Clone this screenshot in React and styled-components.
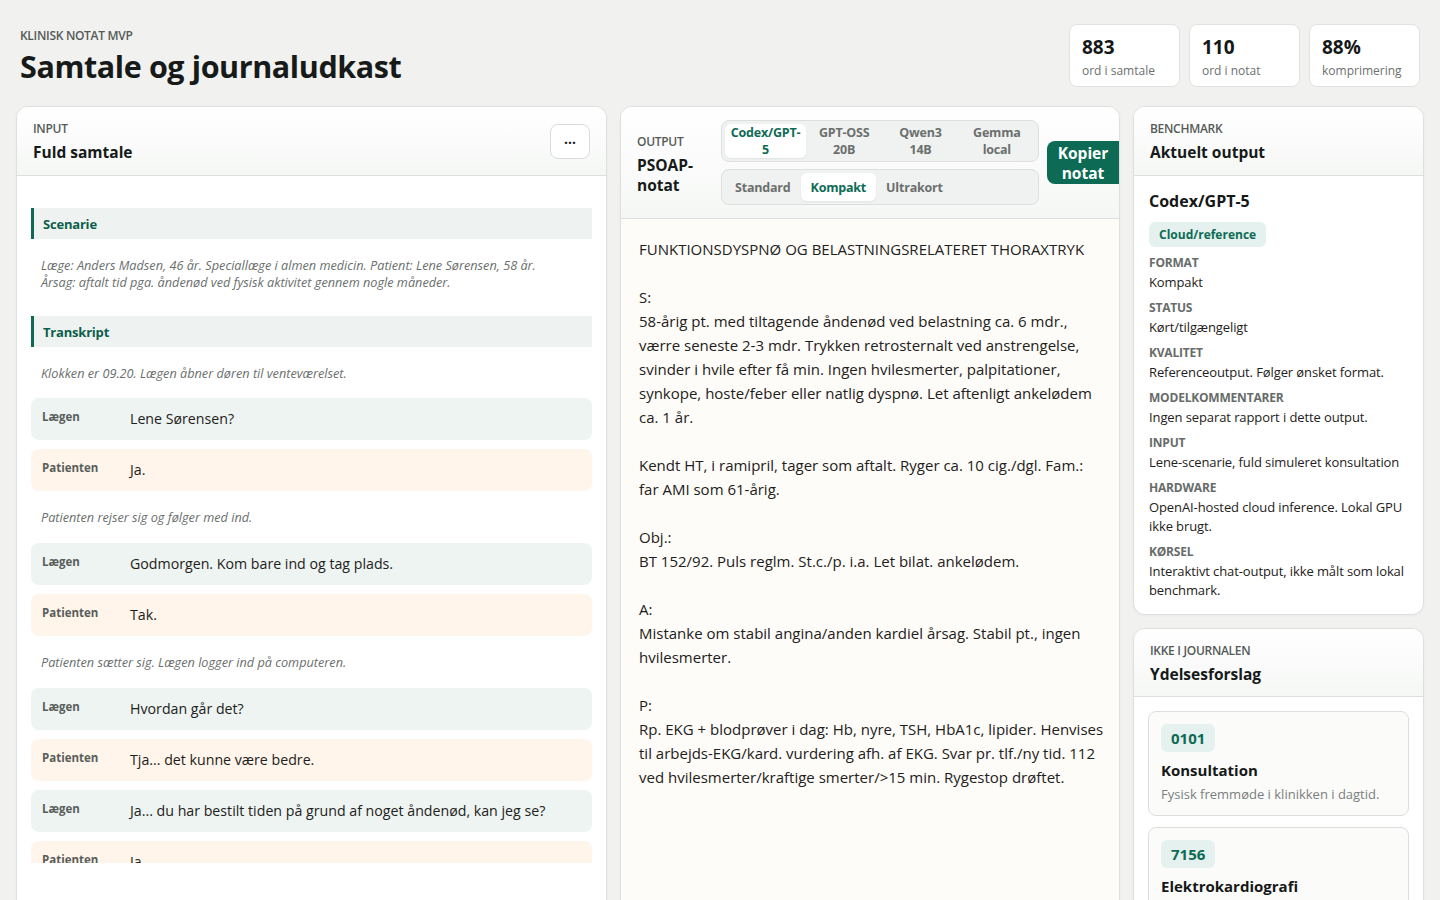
import React from "react";
import styled, { createGlobalStyle } from "styled-components";

const GlobalStyle = createGlobalStyle`
  body {
    margin: 0;
    background: #f1f1ef;
    font-family: "Open Sans", "Noto Sans", sans-serif;
    color: #1c1f1e;
    overflow: hidden;
  }
  * { box-sizing: border-box; }
`;

const Page = styled.div`
  padding: 0 16px;
  height: 900px;
  overflow: hidden;
`;

const Header = styled.header`
  display: flex;
  justify-content: space-between;
  align-items: center;
  padding: 23px 4px 19px 4px;
`;

const Kicker = styled.div`
  font-size: 12px;
  font-weight: 600;
  letter-spacing: -0.3px;
  color: #555a58;
  text-transform: uppercase;
`;

const PageKicker = styled(Kicker)`
  margin-top: 4px;
`;

const Title = styled.h1`
  margin: 1px 0 0;
  font-size: 30.5px;
  font-weight: 700;
  letter-spacing: -0.4px;
  color: #161a19;
`;

const Stats = styled.div`
  display: flex;
  gap: 9px;
`;

const Stat = styled.div`
  width: 111px;
  height: 63px;
  background: #fff;
  border: 1px solid #e0e2e1;
  border-radius: 8px;
  padding: 10px 12px;
`;

const StatValue = styled.div`
  font-size: 19px;
  font-weight: 700;
  line-height: 24px;
  color: #151817;
`;

const StatLabel = styled.div`
  font-size: 12px;
  color: #6b706e;
  margin-top: 3px;
`;

const Grid = styled.main`
  display: grid;
  grid-template-columns: 591px 500px 1fr;
  gap: 13px;
  align-items: start;
`;

const Panel = styled.section`
  background: #fff;
  border: 1px solid #dde0de;
  border-radius: 12px;
  overflow: hidden;
  box-shadow: 0 1px 3px rgba(0, 0, 0, 0.04);
  min-height: ${(p) => p.$minHeight || "auto"};
`;

const PanelHead = styled.div`
  display: flex;
  align-items: center;
  justify-content: space-between;
  gap: 8px;
  min-height: ${(p) => p.$height || "69px"};
  padding: ${(p) => p.$pad || "0 16px"};
  background: linear-gradient(180deg, #ffffff 0%, #f5f7f5 100%);
  border-bottom: 1px solid #dbe0de;
`;

const HeadTitle = styled.div`
  font-size: 15.5px;
  font-weight: 700;
  color: #161a19;
  margin-top: 5px;
  line-height: 20px;
`;

const MoreButton = styled.button`
  width: 40px;
  height: 35px;
  border: 1px solid #d9dcdb;
  border-radius: 8px;
  background: #fff;
  font-size: 14px;
  font-weight: 700;
  color: #222;
  padding: 0 0 6px;
  font-family: inherit;
`;

const InputBody = styled.div`
  padding: 32px 14px 0;
  height: 687px;
  overflow: hidden;
`;

const Flow = styled.div`
  display: flex;
  flex-direction: column;
  gap: 9px;
`;

const SectionBar = styled.div`
  height: 31px;
  display: flex;
  align-items: center;
  padding: 0 9px;
  background: #eef3f1;
  border-left: 3px solid #0d6b55;
  font-size: 13px;
  font-weight: 700;
  color: #0d5e4b;
  letter-spacing: -0.2px;
`;

const Note = styled.p`
  margin: ${(p) => p.$margin || "9px 0 8px"};
  padding: 0 10px;
  font-size: 12.7px;
  font-style: italic;
  line-height: 17px;
  color: #6a6f6d;
`;

const Line = styled.div`
  display: grid;
  grid-template-columns: 88px 1fr;
  align-items: start;
  min-height: 42px;
  padding: 11px 11px 9px;
  border-radius: 8px;
  background: ${(p) => (p.$who === "doc" ? "#edf4f1" : "#fff5ea")};
`;

const Speaker = styled.span`
  font-size: 11.5px;
  font-weight: 700;
  color: #595e5c;
  line-height: 16px;
`;

const Speech = styled.span`
  font-size: 14.2px;
  line-height: 20px;
  color: #1e2120;
`;

const OutTitleBlock = styled.div`
  width: 76px;
  flex-shrink: 0;
  padding-top: 3px;
`;

const Controls = styled.div`
  display: flex;
  flex-direction: column;
  gap: 7px;
  width: 318px;
  flex-shrink: 0;
`;

const TabGroup = styled.div`
  display: ${(p) => (p.$equal ? "grid" : "flex")};
  grid-template-columns: 81px 1fr 1fr 1fr;
  padding: 3px;
  background: #f0f2f1;
  border: 1px solid #dcdfdd;
  border-radius: 8px;
  min-height: ${(p) => (p.$equal ? "41px" : "36px")};
`;

const Tab = styled.div`
  display: flex;
  align-items: center;
  justify-content: center;
  text-align: center;
  padding: 0 ${(p) => (p.$tight ? "6px" : "10px")};
  border-radius: 6px;
  font-size: 12.5px;
  font-weight: 700;
  line-height: 17px;
  letter-spacing: -0.2px;
  color: ${(p) => (p.$active ? "#0d6b55" : "#6b6f6d")};
  background: ${(p) => (p.$active ? "#fff" : "transparent")};
  box-shadow: ${(p) => (p.$active ? "0 1px 2px rgba(0,0,0,0.06)" : "none")};
`;

const CopyButton = styled.button`
  width: 72px;
  height: 43px;
  flex-shrink: 0;
  border: none;
  border-radius: 8px 0 0 8px;
  background: #0d6b55;
  color: #fff;
  font-family: inherit;
  font-size: 15.5px;
  font-weight: 700;
  line-height: 20px;
  padding: 0;
`;

const NoteBody = styled.div`
  background: #fdfcf8;
  padding: 18px 18px;
  min-height: 700px;
`;

const NoteText = styled.pre`
  margin: 0;
  font-family: inherit;
  white-space: pre;
  font-size: 15px;
  line-height: 24px;
  color: #1e2120;
`;

const Side = styled.div`
  display: flex;
  flex-direction: column;
  gap: 13px;
`;

const CardBody = styled.div`
  padding: ${(p) => p.$pad || "14px 15px"};
`;

const ModelName = styled.div`
  font-size: 16px;
  font-weight: 700;
  color: #151817;
  line-height: 20px;
  margin-top: 1px;
`;

const Badge = styled.span`
  display: inline-flex;
  align-items: center;
  height: ${(p) => p.$height || "25px"};
  padding: 0 10px;
  border-radius: 6px;
  background: #e5f1ee;
  color: #0d6b55;
  font-size: ${(p) => p.$size || "12px"};
  font-weight: 700;
  margin: ${(p) => p.$margin || "0"};
`;

const Field = styled.div`
  margin-top: 8px;
`;

const FieldLabel = styled.div`
  font-size: 12px;
  font-weight: 700;
  color: #676c6a;
  line-height: 16px;
  text-transform: uppercase;
  letter-spacing: -0.2px;
`;

const FieldValue = styled.div`
  font-size: 13px;
  line-height: 19px;
  color: #1e2120;
  margin-top: 2px;
  margin-right: -6px;
  letter-spacing: -0.1px;
`;

const ServiceList = styled.div`
  display: flex;
  flex-direction: column;
  gap: 11px;
`;

const Service = styled.div`
  border: 1px solid #dcdfdd;
  border-radius: 8px;
  background: #fbfbfa;
  padding: 12px 12px 12px;
`;

const ServiceName = styled.div`
  font-size: 15px;
  font-weight: 700;
  color: #151817;
  margin-top: 8px;
  line-height: 20px;
`;

const ServiceDesc = styled.div`
  font-size: 13px;
  color: #7a7f7d;
  margin-top: 5px;
  line-height: 18px;
`;

const transcript = [
  ["doc", "Lene Sørensen?"],
  ["pat", "Ja."],
  ["note", "Patienten rejser sig og følger med ind."],
  ["doc", "Godmorgen. Kom bare ind og tag plads."],
  ["pat", "Tak."],
  ["note", "Patienten sætter sig. Lægen logger ind på computeren."],
  ["doc", "Hvordan går det?"],
  ["pat", "Tja... det kunne være bedre."],
  ["doc", "Ja... du har bestilt tiden på grund af noget åndenød, kan jeg se?"],
  ["pat", "Ja."],
  ["doc", "Hvor længe har det stået på?"],
];

const note = `FUNKTIONSDYSPNØ OG BELASTNINGSRELATERET THORAXTRYK

S:
58-årig pt. med tiltagende åndenød ved belastning ca. 6 mdr.,
værre seneste 2-3 mdr. Trykken retrosternalt ved anstrengelse,
svinder i hvile efter få min. Ingen hvilesmerter, palpitationer,
synkope, hoste/feber eller natlig dyspnø. Let aftenligt ankelødem
ca. 1 år.

Kendt HT, i ramipril, tager som aftalt. Ryger ca. 10 cig./dgl. Fam.:
far AMI som 61-årig.

Obj.:
BT 152/92. Puls reglm. St.c./p. i.a. Let bilat. ankelødem.

A:
Mistanke om stabil angina/anden kardiel årsag. Stabil pt., ingen
hvilesmerter.

P:
Rp. EKG + blodprøver i dag: Hb, nyre, TSH, HbA1c, lipider. Henvises
til arbejds-EKG/kard. vurdering afh. af EKG. Svar pr. tlf./ny tid. 112
ved hvilesmerter/kraftige smerter/>15 min. Rygestop drøftet.`;

const fields = [
  ["Format", "Kompakt"],
  ["Status", "Kørt/tilgængeligt"],
  ["Kvalitet", "Referenceoutput. Følger ønsket format."],
  ["Modelkommentarer", "Ingen separat rapport i dette output."],
  ["Input", "Lene-scenarie, fuld simuleret konsultation"],
  ["Hardware", "OpenAI-hosted cloud inference. Lokal GPU ikke brugt."],
  ["Kørsel", "Interaktivt chat-output, ikke målt som lokal benchmark."],
];

const models = ["Codex/GPT-5", "GPT-OSS 20B", "Qwen3 14B", "Gemma local"];
const formats = ["Standard", "Kompakt", "Ultrakort"];

export default function App() {
  return (
    <>
      <GlobalStyle />
      <Page>
        <Header>
          <div>
            <PageKicker>Klinisk notat MVP</PageKicker>
            <Title>Samtale og journaludkast</Title>
          </div>
          <Stats>
            <Stat>
              <StatValue>883</StatValue>
              <StatLabel>ord i samtale</StatLabel>
            </Stat>
            <Stat>
              <StatValue>110</StatValue>
              <StatLabel>ord i notat</StatLabel>
            </Stat>
            <Stat>
              <StatValue>88%</StatValue>
              <StatLabel>komprimering</StatLabel>
            </Stat>
          </Stats>
        </Header>

        <Grid>
          <Panel $minHeight="860px">
            <PanelHead>
              <div>
                <Kicker>Input</Kicker>
                <HeadTitle>Fuld samtale</HeadTitle>
              </div>
              <MoreButton>...</MoreButton>
            </PanelHead>
            <InputBody>
              <SectionBar>Scenarie</SectionBar>
              <Note $margin="18px 0 25px">
                Læge: Anders Madsen, 46 år. Speciallæge i almen medicin. Patient: Lene Sørensen, 58 år.
                <br />
                Årsag: aftalt tid pga. åndenød ved fysisk aktivitet gennem nogle måneder.
              </Note>
              <SectionBar>Transkript</SectionBar>
              <Note $margin="18px 0 16px">Klokken er 09.20. Lægen åbner døren til venteværelset.</Note>
              <Flow>
                {transcript.map(([who, text], i) =>
                  who === "note" ? (
                    <Note key={i}>{text}</Note>
                  ) : (
                    <Line key={i} $who={who}>
                      <Speaker>{who === "doc" ? "Lægen" : "Patienten"}</Speaker>
                      <Speech>{text}</Speech>
                    </Line>
                  )
                )}
              </Flow>
            </InputBody>
          </Panel>

          <Panel $minHeight="860px">
            <PanelHead $height="112px" $pad="0 0 0 16px">
              <OutTitleBlock>
                <Kicker>Output</Kicker>
                <HeadTitle>PSOAP-notat</HeadTitle>
              </OutTitleBlock>
              <Controls>
                <TabGroup $equal>
                  {models.map((m, i) => (
                    <Tab key={m} $active={i === 0} $tight>
                      {m}
                    </Tab>
                  ))}
                </TabGroup>
                <TabGroup>
                  {formats.map((f, i) => (
                    <Tab key={f} $active={i === 1}>
                      {f}
                    </Tab>
                  ))}
                </TabGroup>
              </Controls>
              <CopyButton>Kopier notat</CopyButton>
            </PanelHead>
            <NoteBody>
              <NoteText>{note}</NoteText>
            </NoteBody>
          </Panel>

          <Side>
            <Panel>
              <PanelHead>
                <div>
                  <Kicker>Benchmark</Kicker>
                  <HeadTitle>Aktuelt output</HeadTitle>
                </div>
              </PanelHead>
              <CardBody>
                <ModelName>Codex/GPT-5</ModelName>
                <Badge $margin="11px 0 0">Cloud/reference</Badge>
                {fields.map(([label, value]) => (
                  <Field key={label}>
                    <FieldLabel>{label}</FieldLabel>
                    <FieldValue>{value}</FieldValue>
                  </Field>
                ))}
              </CardBody>
            </Panel>
            <Panel>
              <PanelHead $height="68px">
                <div>
                  <Kicker>Ikke i journalen</Kicker>
                  <HeadTitle>Ydelsesforslag</HeadTitle>
                </div>
              </PanelHead>
              <CardBody $pad="14px 14px">
                <ServiceList>
                  <Service>
                    <Badge $height="28px" $size="15px">0101</Badge>
                    <ServiceName>Konsultation</ServiceName>
                    <ServiceDesc>Fysisk fremmøde i klinikken i dagtid.</ServiceDesc>
                  </Service>
                  <Service>
                    <Badge $height="28px" $size="15px">7156</Badge>
                    <ServiceName>Elektrokardiografi</ServiceName>
                    <ServiceDesc>EKG optaget og vurderet.</ServiceDesc>
                  </Service>
                </ServiceList>
              </CardBody>
            </Panel>
          </Side>
        </Grid>
      </Page>
    </>
  );
}
